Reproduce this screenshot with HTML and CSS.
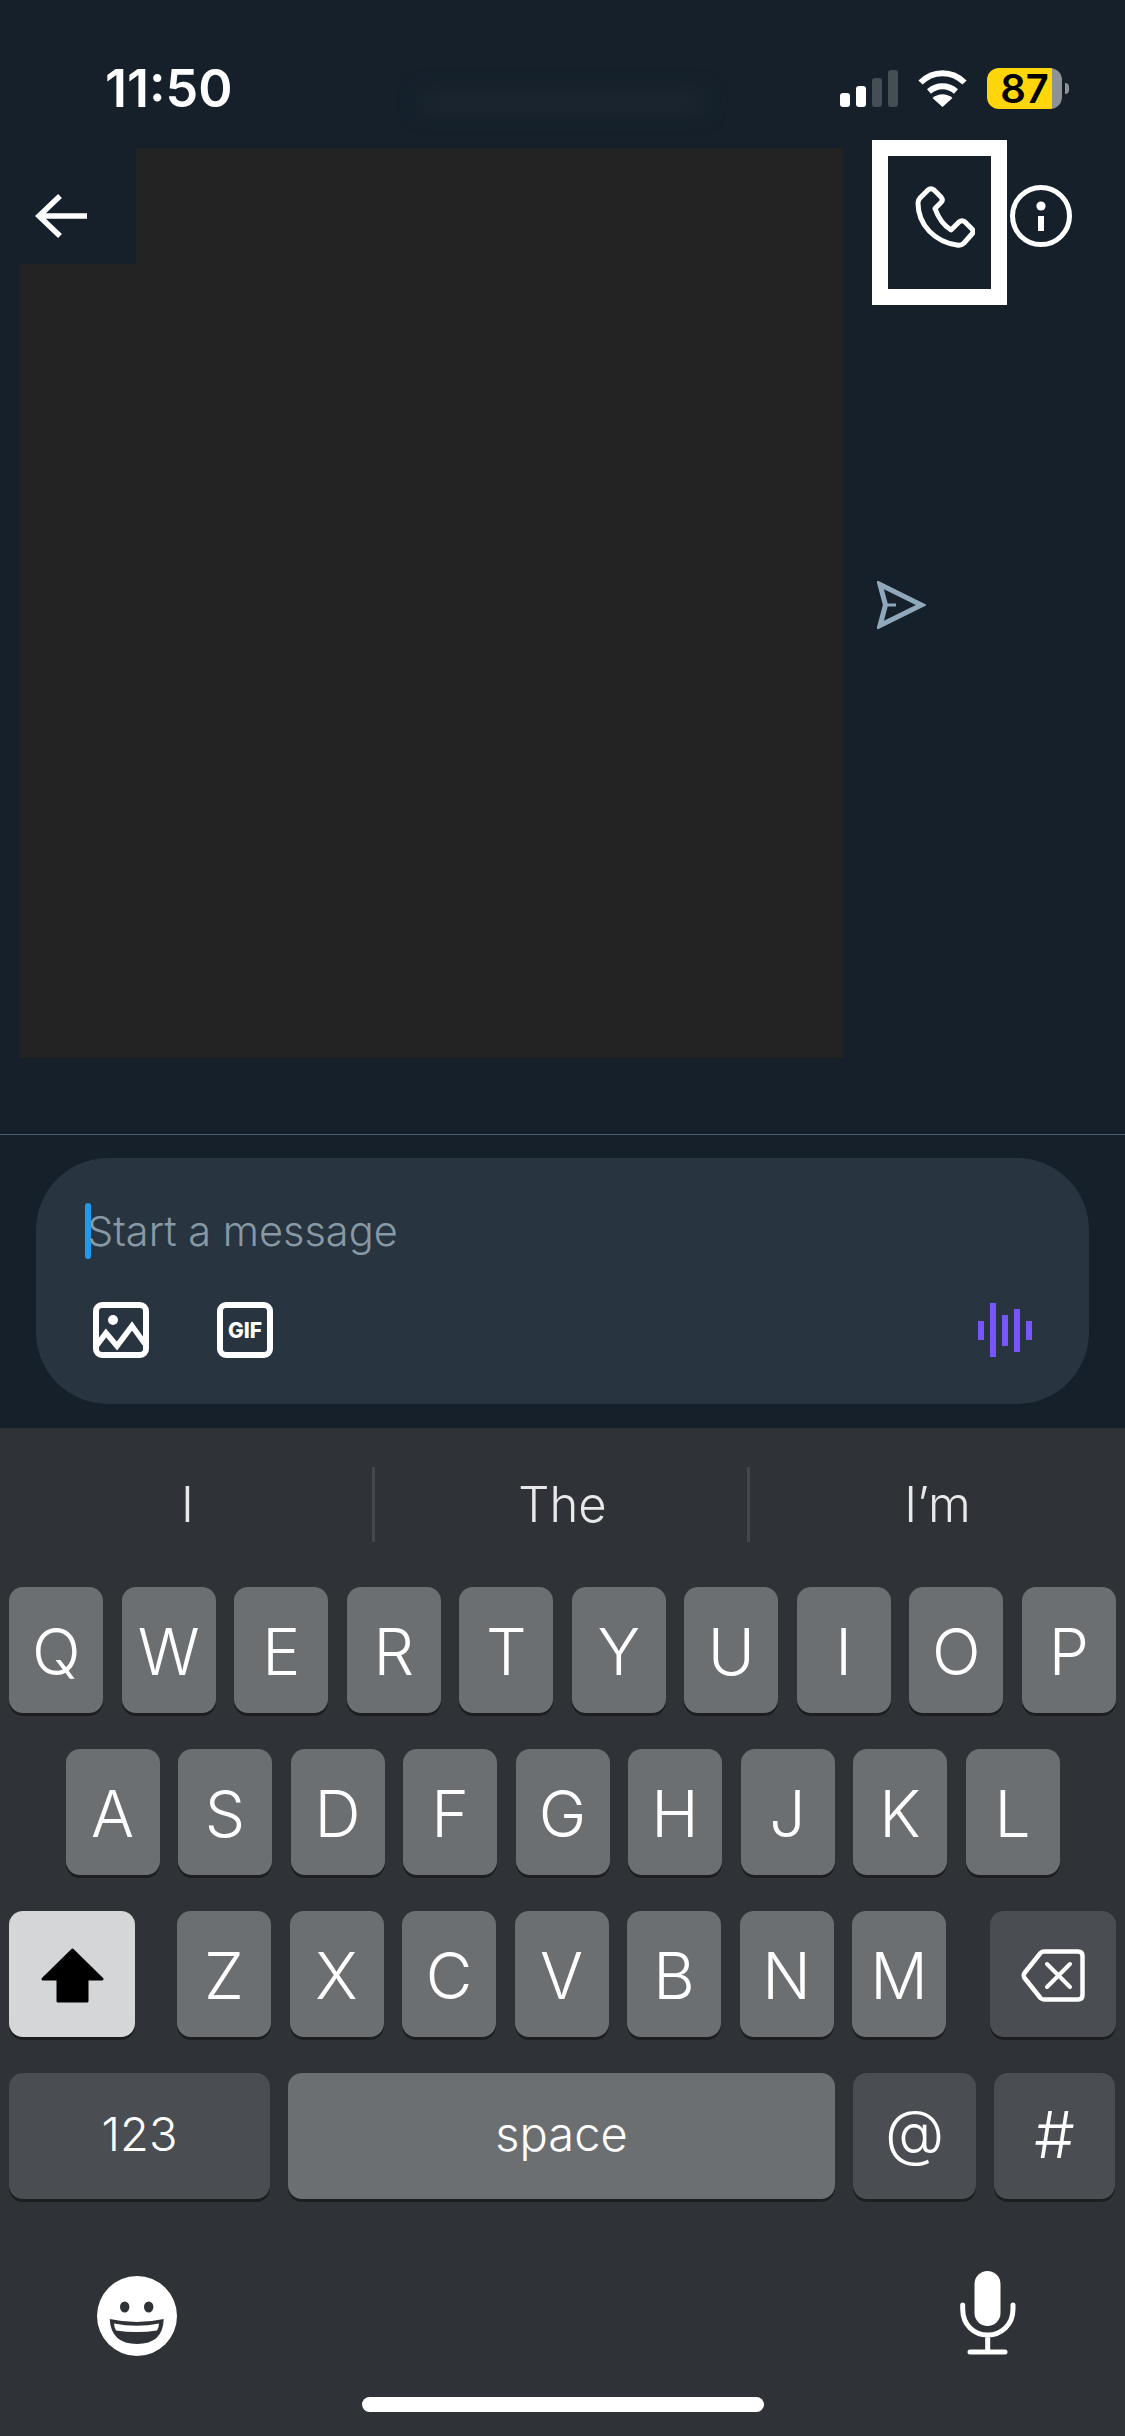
FILE: index.html
```html
<!DOCTYPE html>
<html lang="en">
  <head>
    <meta charset="UTF-8" />
    <meta name="viewport" content="width=device-width, initial-scale=1.0" />
    <title>Message</title>
    <link rel="stylesheet" href="styles.css">
  </head>
  <body>
    <div class="screen">
      <div class="title-blur"></div>

      <div class="status">
        <span class="time">11:50</span>
        <div class="status-icons">
          <div class="signal">
            <span class="bar bar-1"></span>
            <span class="bar bar-2"></span>
            <span class="bar bar-3 off"></span>
            <span class="bar bar-4 off"></span>
          </div>
          <svg class="wifi" width="51" height="37" viewBox="0 0 51 37">
            <path d="M3.5 12.5C16 0 35 0 47.5 12.5M12 21.5C20 14.5 31 14.5 39 21.5" fill="none" stroke="#fff" stroke-width="6" />
            <path d="M25.5 37L15.5 28C22 23 29 23 35.5 28Z" fill="#fff" />
          </svg>
          <div class="battery"><span>87</span></div>
        </div>
      </div>

      <div class="nav">
        <svg class="back" width="53" height="44" viewBox="0 0 53 44">
          <path d="M53 22H5M26 2L5 22L26 42" fill="none" stroke="#fff" stroke-width="5.5" />
        </svg>
        <div class="nav-actions">
          <svg width="60" height="63" viewBox="0 0 60 63">
            <path d="M3 18Q3 15 5 13L13 5Q16 2.5 19 5L26 12Q28.5 15 26 17.5L20 23.5Q25 38 36 45L44 37Q47 34.5 50 37L57 44Q59 47 57 49L49 58Q46 61 42 60C20 57 3 40 3 18Z" fill="none" stroke="#fff" stroke-width="5" stroke-linejoin="round" />
          </svg>
          <svg width="62" height="62" viewBox="0 0 62 62">
            <circle cx="31" cy="31" r="28.5" fill="none" stroke="#fff" stroke-width="5" />
            <circle cx="31" cy="21" r="4.6" fill="#fff" />
            <rect x="28" y="31" width="6" height="15" fill="#fff" />
          </svg>
        </div>
      </div>

      <div class="thread">
        <svg width="49" height="48" viewBox="0 0 49 48">
          <path d="M3 3.5L44.5 24L3 44.5L8.5 24Z" fill="none" stroke="#8fa8bc" stroke-width="5" />
          <path d="M8 24H19" fill="none" stroke="#8fa8bc" stroke-width="3" />
        </svg>
      </div>

      <div class="composer-wrap">
        <div class="composer">
          <div class="input-line">
            <span class="caret"></span>
            <span class="placeholder">Start a message</span>
          </div>
          <div class="composer-actions">
            <svg width="56" height="56" viewBox="0 0 56 56">
              <rect x="3" y="3" width="50" height="50" rx="6" fill="none" stroke="#fff" stroke-width="6" />
              <circle cx="20" cy="18" r="5" fill="#fff" />
              <path d="M4 43L13 31L24 44L39 24L52 42" fill="none" stroke="#fff" stroke-width="5.5" />
            </svg>
            <svg class="gif-icon" width="56" height="56" viewBox="0 0 56 56">
              <rect x="3" y="3" width="50" height="50" rx="6" fill="none" stroke="#fff" stroke-width="6" />
              <text x="28" y="36" text-anchor="middle" class="gif-label">GIF</text>
            </svg>
            <div class="voice">
              <span class="voice-bar v1"></span>
              <span class="voice-bar v2"></span>
              <span class="voice-bar v3"></span>
              <span class="voice-bar v4"></span>
              <span class="voice-bar v1"></span>
            </div>
          </div>
        </div>
      </div>

      <div class="keyboard">
        <div class="suggestions">
          <span class="suggestion">I</span>
          <span class="suggestion">The</span>
          <span class="suggestion">I’m</span>
        </div>

        <div class="keys">
          <div class="row">
            <span class="key">Q</span><span class="key">W</span><span class="key">E</span><span class="key">R</span><span class="key">T</span><span class="key">Y</span><span class="key">U</span><span class="key">I</span><span class="key">O</span><span class="key">P</span>
          </div>
          <div class="row">
            <span class="key">A</span><span class="key">S</span><span class="key">D</span><span class="key">F</span><span class="key">G</span><span class="key">H</span><span class="key">J</span><span class="key">K</span><span class="key">L</span>
          </div>
          <div class="row row-shift">
            <span class="key key-shift">
              <svg width="63" height="55" viewBox="0 0 63 55">
                <path d="M31.5 2L61 31H46V53H17V31H2Z" fill="#000" stroke="#000" stroke-width="3" stroke-linejoin="round" />
              </svg>
            </span>
            <div class="letters">
              <span class="key">Z</span><span class="key">X</span><span class="key">C</span><span class="key">V</span><span class="key">B</span><span class="key">N</span><span class="key">M</span>
            </div>
            <span class="key key-fn key-delete">
              <svg width="64" height="53" viewBox="0 0 64 53">
                <path d="M23 2.5H57Q61.5 2.5 61.5 7V46Q61.5 50.5 57 50.5H23Q21 50.5 19.5 49L3.5 29Q2 26.5 3.5 24L19.5 4Q21 2.5 23 2.5Z" fill="none" stroke="#fff" stroke-width="4.5" stroke-linejoin="round" />
                <path d="M26 15L49 38M49 15L26 38" fill="none" stroke="#fff" stroke-width="4" stroke-linecap="round" />
              </svg>
            </span>
          </div>
          <div class="row row-bottom">
            <span class="key key-fn key-small key-123">123</span>
            <span class="key key-small key-space">space</span>
            <span class="key key-fn key-at">@</span>
            <span class="key key-fn key-hash">#</span>
          </div>
        </div>

        <div class="keyboard-foot">
          <svg class="emoji" width="80" height="80" viewBox="0 0 80 80">
            <circle cx="40" cy="40" r="40" fill="#fff" />
            <ellipse cx="27.7" cy="31" rx="4.7" ry="5.5" fill="#2f3337" />
            <ellipse cx="51.7" cy="31" rx="4.7" ry="5.5" fill="#2f3337" />
            <path d="M12.7 43Q40 49 66.7 43Q66 68 40 68Q14 68 12.7 43Z" fill="#2f3337" />
            <path d="M17 47.5Q40 52 62 47.5Q62 51 60 54.5Q40 57.5 19 54.5Q17 51 17 47.5Z" fill="#fff" />
          </svg>
          <svg width="56" height="84" viewBox="0 0 56 84">
            <rect x="14.5" y="0" width="26" height="55" rx="13" fill="#fff" />
            <path d="M2.7 34V38C2.7 54 14 64 27.7 64C41 64 53 54 53 38V34M27.7 64V81M10 81H45" fill="none" stroke="#fff" stroke-width="5" stroke-linecap="round" />
          </svg>
        </div>

        <div class="home-bar"></div>
      </div>

      <!-- blocks painted over the screenshot -->
      <div class="redact redact-top"></div>
      <div class="redact redact-main"></div>
      <div class="highlight"></div>
    </div>
  </body>
</html>
```

FILE: styles.css
```css
body {
  margin: 0;
  font-family: Inter, "Liberation Sans", sans-serif;
  color: #fff;
}
.screen {
  position: relative;
  display: flex;
  flex-direction: column;
  width: 1125px;
  height: 2436px;
  overflow: hidden;
  background-color: #15202b;
}
.title-blur {
  position: absolute;
  left: 420px;
  top: 92px;
  width: 285px;
  height: 20px;
  background-color: #1c2630;
  filter: blur(10px);
}
.status {
  display: flex;
  align-items: center;
  justify-content: space-between;
  box-sizing: border-box;
  height: 140px;
  padding: 68px 56px 31px 105px;
}
.time {
  font-size: 52px;
  font-weight: 600;
}
.status-icons {
  display: flex;
  align-items: center;
  gap: 19px;
}
.signal {
  display: flex;
  align-items: flex-end;
  gap: 6px;
}
.bar {
  width: 10px;
  border-radius: 3px;
  background-color: #fff;
}
.bar.off {
  background-color: #454d55;
}
.bar-1 { height: 14px; }
.bar-2 { height: 21px; }
.bar-3 { height: 29px; }
.bar-4 { height: 37px; }
.battery {
  position: relative;
  display: flex;
  align-items: center;
  justify-content: center;
  width: 75px;
  height: 41px;
  margin-right: 7px;
  border-radius: 12px;
  background: linear-gradient(to right, #ffd60a 65px, #8e9196 65px);
  color: #000;
  font-size: 40px;
  font-weight: 600;
}
.battery::after {
  content: "";
  position: absolute;
  left: 78px;
  top: 15px;
  width: 4px;
  height: 11px;
  border-radius: 0 5px 5px 0;
  background-color: #8e9196;
}
.nav {
  display: flex;
  align-items: center;
  justify-content: space-between;
  height: 152px;
  padding: 0 53px 0 34px;
}
.nav-actions {
  display: flex;
  align-items: center;
  gap: 35px;
}
.thread {
  flex: 1;
  padding: 289px 0 0 877px;
  border-bottom: 1px solid #4a5d70;
}
.composer-wrap {
  padding: 23px 36px 24px;
}
.composer {
  box-sizing: border-box;
  height: 246px;
  padding: 45px 57px 46px 49px;
  border-radius: 72px;
  background-color: #28343f;
}
.input-line {
  display: flex;
  align-items: center;
  height: 56px;
}
.caret {
  width: 6px;
  height: 56px;
  border-radius: 3px;
  background-color: #1d9bf0;
}
.placeholder {
  margin-left: -4px;
  color: #8899a6;
  font-size: 41.5px;
  font-weight: 350;
}
.composer-actions {
  display: flex;
  align-items: center;
  margin: 43px 0 0 8px;
}
.gif-icon {
  margin-left: 68px;
}
.gif-label {
  fill: #fff;
  font-size: 21px;
  font-weight: 800;
}
.voice {
  display: flex;
  align-items: center;
  gap: 6px;
  margin-left: auto;
}
.voice-bar {
  width: 6px;
  background-color: #7856ff;
}
.v1 { height: 19px; }
.v2 { height: 54px; }
.v3 { height: 31px; }
.v4 { height: 43px; }
.keyboard {
  flex-shrink: 0;
  height: 1008px;
  background-color: #2f3337;
}
.suggestions {
  display: grid;
  grid-template-columns: repeat(3, 1fr);
  padding-top: 39px;
}
.suggestion {
  height: 75px;
  padding-left: 3px;
  line-height: 75px;
  border-right: 3px solid #44484c;
  color: #e8e8e8;
  font-size: 49px;
  font-weight: 350;
  text-align: center;
}
.suggestion:last-child {
  border-right: none;
  padding-left: 0;
}
.keys {
  display: flex;
  flex-direction: column;
  gap: 36px;
  margin-top: 45px;
}
.row {
  display: flex;
  justify-content: center;
  gap: 18.5px;
}
.key {
  display: flex;
  align-items: center;
  justify-content: center;
  box-sizing: border-box;
  width: 94px;
  height: 126px;
  padding-top: 2px;
  border-radius: 14px;
  background-color: #6c6f72;
  box-shadow: 0 3px 0 #1c1e20;
  font-size: 64px;
  font-weight: 350;
}
.row-shift,
.row-bottom {
  justify-content: flex-start;
  padding-left: 9px;
}
.letters {
  display: flex;
  gap: 18.5px;
  margin-left: 23.5px;
}
.key-shift {
  width: 126px;
  background-color: #d5d6d8;
}
.key-fn {
  background-color: #4a4d51;
}
.key-delete {
  width: 126px;
  margin-left: auto;
  margin-right: 9px;
}
.row-bottom {
  gap: 18px;
}
.key-small {
  padding-bottom: 8px;
  font-size: 47px;
}
.key-123 { width: 261px; }
.key-space { width: 547px; }
.key-at {
  width: 123px;
  padding-bottom: 10px;
  font-size: 61px;
}
.key-hash {
  width: 121px;
  padding-bottom: 5px;
}
.keyboard-foot {
  display: flex;
  align-items: center;
  justify-content: space-between;
  height: 84px;
  padding: 72px 109px 0 97px;
}
.emoji {
  margin-top: 6px;
}
.home-bar {
  width: 402px;
  height: 15px;
  margin: 42px auto 0;
  border-radius: 8px;
  background-color: #fff;
}
.redact {
  position: absolute;
  background-color: #232323;
}
.redact-top {
  left: 136px;
  top: 148px;
  width: 707px;
  height: 116px;
}
.redact-main {
  left: 19px;
  top: 264px;
  width: 824px;
  height: 794px;
}
.highlight {
  position: absolute;
  left: 872px;
  top: 140px;
  box-sizing: border-box;
  width: 135px;
  height: 165px;
  border: 16px solid #fff;
}
```
